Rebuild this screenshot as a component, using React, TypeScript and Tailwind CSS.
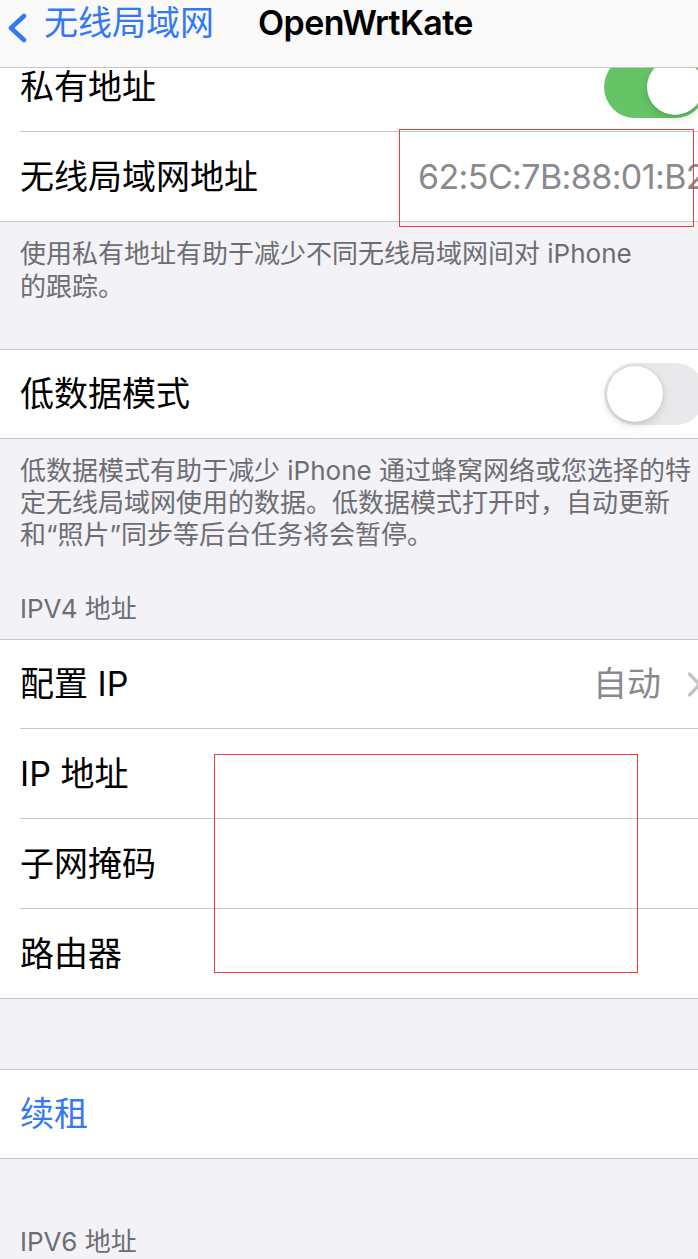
import React from "react";

const FONT = { fontFamily: 'Inter, "Noto Sans CJK SC", sans-serif' };

function ToggleOn() {
  return (
    <div className="relative w-[102px] h-[62px] rounded-full bg-[#65c466] shrink-0">
      <div className="absolute right-[3px] top-[3px] w-[56px] h-[56px] rounded-full bg-white shadow-[0_3px_8px_rgba(0,0,0,0.15),0_1px_1px_rgba(0,0,0,0.08)]" />
    </div>
  );
}

function ToggleOff() {
  return (
    <div className="relative w-[102px] h-[62px] rounded-full bg-[#e9e9eb] shrink-0">
      <div className="absolute left-[3px] top-[3px] w-[56px] h-[56px] rounded-full bg-white shadow-[0_3px_8px_rgba(0,0,0,0.15),0_0_0_1px_rgba(0,0,0,0.04)]" />
    </div>
  );
}

function Sep() {
  return <div className="ml-[20px] h-px bg-[#c8c7cc]" />;
}

function Row({ h, children }: { h: string; children: React.ReactNode }) {
  return <div className={`flex items-center pl-[20px] ${h}`}>{children}</div>;
}

export default function App() {
  return (
    <div
      className="relative w-[698px] h-[1259px] overflow-hidden bg-[#f2f2f7] text-black"
      style={FONT}
    >
      {/* nav bar */}
      <div className="absolute left-0 top-0 z-10 w-full h-[68px] bg-[#f9f9f9] border-b border-[#c4c4c6] flex items-start">
        <svg className="ml-[6px] mt-[13px]" width="22" height="30" viewBox="0 0 22 30" fill="none">
          <path d="M18 3 L5 15 L18 27" stroke="#3478f6" strokeWidth="4.6" strokeLinecap="round" strokeLinejoin="round" />
        </svg>
        <span className="ml-[16px] mt-[4px] text-[34px] leading-[38px] text-[#3478f6]">无线局域网</span>
        <span className="ml-[44px] mt-[4px] text-[34px] leading-[38px] font-semibold tracking-[-0.6px]">OpenWrtKate</span>
      </div>

      <div className="w-[750px] pt-[42px]">
        {/* group 1 */}
        <div className="bg-white border-y border-[#c8c7cc]">
          <div className="flex items-center justify-between pl-[20px] pr-[44px] h-[88px]">
            <span className="text-[34px] leading-none">私有地址</span>
            <ToggleOn />
          </div>
          <Sep />
          <div className="grid grid-cols-[398px_1fr] items-center pl-[20px] h-[89px]">
            <span className="text-[34px] leading-none">无线局域网地址</span>
            <span className="text-[34px] leading-none text-[#8a8a8e] whitespace-nowrap tracking-[-0.6px]">62:5C:7B:88:01:B2</span>
          </div>
        </div>

        <div className="px-[20px] pt-[15px] pb-[46px] text-[26px] leading-[33px] text-[#6d6d72] whitespace-nowrap">
          使用私有地址有助于减少不同无线局域网间对 iPhone
          <br />
          的跟踪。
        </div>

        {/* group 2 */}
        <div className="bg-white border-y border-[#c8c7cc]">
          <div className="flex items-center justify-between pl-[20px] pr-[44px] h-[88px]">
            <span className="text-[34px] leading-none">低数据模式</span>
            <ToggleOff />
          </div>
        </div>

        <div className="px-[20px] pt-[16px] text-[26px] leading-[32px] text-[#6d6d72] whitespace-nowrap">
          低数据模式有助于减少 iPhone 通过蜂窝网络或您选择的特
          <br />
          定无线局域网使用的数据。低数据模式打开时，自动更新
          <br />
          和“照片”同步等后台任务将会暂停。
        </div>

        <div className="px-[20px] mt-[41px] pb-[14px] text-[26px] leading-[33px] text-[#6d6d72]">
          IPV4 地址
        </div>

        {/* group 3 */}
        <div className="bg-white border-y border-[#c8c7cc]">
          <div className="flex items-center pl-[20px] pr-[48px] h-[88px]">
            <span className="text-[34px] leading-none">配置 IP</span>
            <span className="ml-auto text-[34px] leading-none text-[#8a8a8e]">自动</span>
            <svg className="ml-[26px]" width="15" height="25" viewBox="0 0 15 25" fill="none">
              <path d="M2.5 2 L12.5 12.5 L2.5 23" stroke="#c4c4c7" strokeWidth="3.4" strokeLinecap="round" strokeLinejoin="round" />
            </svg>
          </div>
          <Sep />
          <Row h="h-[89px]">
            <span className="text-[34px] leading-none">IP 地址</span>
          </Row>
          <Sep />
          <Row h="h-[89px]">
            <span className="text-[34px] leading-none">子网掩码</span>
          </Row>
          <Sep />
          <Row h="h-[89px]">
            <span className="text-[34px] leading-none">路由器</span>
          </Row>
        </div>

        <div className="h-[70px]" />

        {/* group 4 */}
        <div className="bg-white border-y border-[#c8c7cc]">
          <Row h="h-[88px]">
            <span className="text-[34px] leading-none text-[#3478f6]">续租</span>
          </Row>
        </div>

        <div className="px-[20px] pt-[66px] text-[26px] leading-[33px] text-[#6d6d72]">
          IPV6 地址
        </div>
      </div>

      {/* red annotation boxes */}
      <div className="absolute left-[399px] top-[129px] w-[295px] h-[98px] border border-[#f33c3c] z-20" />
      <div className="absolute left-[214px] top-[754px] w-[424px] h-[219px] border border-[#f33c3c] z-20" />
    </div>
  );
}
